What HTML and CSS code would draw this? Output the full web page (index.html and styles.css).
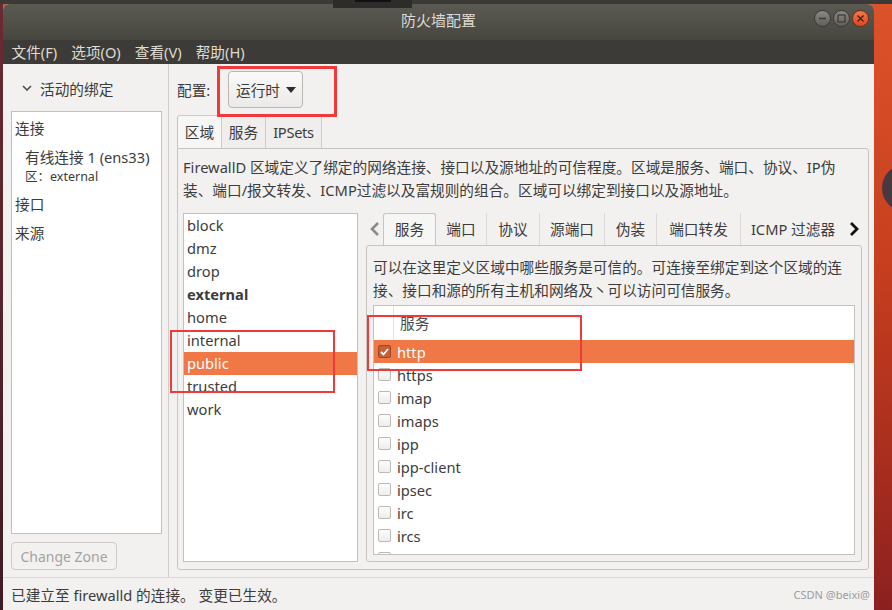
FILE: index.html
```html
<!DOCTYPE html>
<html>
<head>
    <meta charset="UTF-8">
    <title>防火墙配置</title>
    <link rel="stylesheet" href="styles.css">
</head>
<body>

<div class="topbar"></div>
<div class="dock-tab"><i></i></div>
<div class="wall-circle"></div>

<div class="desk">
    <div class="edge"></div>
    <div class="window">
        <div class="titlebar">
            <span class="title">防火墙配置</span>
            <div class="win-btns">
                <span class="wb"><svg width="9" height="9" viewBox="0 0 9 9"><path d="M1 4.5h7" stroke="#3a3935" stroke-width="1.4"/></svg></span>
                <span class="wb"><svg width="9" height="9" viewBox="0 0 9 9"><rect x="1" y="1" width="7" height="7" fill="none" stroke="#3a3935" stroke-width="1.2"/></svg></span>
                <span class="wb close"><svg width="9" height="9" viewBox="0 0 9 9"><path d="M1.5 1.5l6 6M7.5 1.5l-6 6" stroke="#4a1a0c" stroke-width="1.3"/></svg></span>
            </div>
        </div>

        <div class="menubar">
            <span>文件(F)</span>
            <span>选项(O)</span>
            <span>查看(V)</span>
            <span>帮助(H)</span>
        </div>

        <div class="main">
            <div class="side">
                <div class="side-head">
                    <svg width="10" height="6" viewBox="0 0 10 6"><path d="M1 1l4 4 4-4" fill="none" stroke="#4c4c4c" stroke-width="1.6"/></svg>
                    <span>活动的绑定</span>
                </div>
                <div class="bind-box">
                    <div class="bind-title">连接</div>
                    <div class="bind-item">有线连接 1 (ens33)</div>
                    <div class="bind-sub">区：external</div>
                    <div class="bind-title next">接口</div>
                    <div class="bind-title next">来源</div>
                </div>
                <div class="btn-disabled">Change Zone</div>
            </div>

            <div class="content">
                <div class="config-row">
                    <span class="config-label">配置:</span>
                    <div class="combo">运行时
                        <svg width="10" height="6" viewBox="0 0 10 6"><path d="M0 0h10L5 6z" fill="#2e2e2e"/></svg>
                    </div>
                </div>

                <div class="tabs">
                    <span class="tab on">区域</span>
                    <span class="tab">服务</span>
                    <span class="tab">IPSets</span>
                </div>

                <div class="page">
                    <p class="desc">FirewallD 区域定义了绑定的网络连接、接口以及源地址的可信程度。区域是服务、端口、协议、IP伪<br>装、端口/报文转发、ICMP过滤以及富规则的组合。区域可以绑定到接口以及源地址。</p>

                    <div class="zone-row">
                        <div class="zone-list">
                            <div class="zone">block</div>
                            <div class="zone">dmz</div>
                            <div class="zone">drop</div>
                            <div class="zone bold">external</div>
                            <div class="zone">home</div>
                            <div class="zone">internal</div>
                            <div class="zone sel">public</div>
                            <div class="zone">trusted</div>
                            <div class="zone">work</div>
                        </div>

                        <div class="sub-nb">
                            <div class="sub-tabs">
                                <span class="nav"><svg width="10" height="16" viewBox="0 0 10 16"><path d="M8 2L2 8l6 6" fill="none" stroke="#8c8b88" stroke-width="2.6"/></svg></span>
                                <div class="stab-row">
                                    <span class="stab on">服务</span>
                                    <span class="stab">端口</span>
                                    <span class="stab">协议</span>
                                    <span class="stab">源端口</span>
                                    <span class="stab">伪装</span>
                                    <span class="stab">端口转发</span>
                                    <span class="stab">ICMP 过滤器</span>
                                </div>
                                <span class="nav"><svg width="10" height="16" viewBox="0 0 10 16"><path d="M2 2l6 6-6 6" fill="none" stroke="#111" stroke-width="2.8"/></svg></span>
                            </div>
                            <div class="sub-page">
                                <p class="desc">可以在这里定义区域中哪些服务是可信的。可连接至绑定到这个区域的连<br>接、接口和源的所有主机和网络及丶可以访问可信服务。</p>
                                <div class="svc-list">
                                    <div class="svc-head"><span class="col0"></span><span class="col1">服务</span></div>
                                    <div class="svc sel"><span class="cb on"><svg width="9" height="8" viewBox="0 0 9 8"><path d="M1 4l2.5 2.5L8 1" fill="none" stroke="#fff" stroke-width="1.8"/></svg></span>http</div>
                                    <div class="svc"><span class="cb"></span>https</div>
                                    <div class="svc"><span class="cb"></span>imap</div>
                                    <div class="svc"><span class="cb"></span>imaps</div>
                                    <div class="svc"><span class="cb"></span>ipp</div>
                                    <div class="svc"><span class="cb"></span>ipp-client</div>
                                    <div class="svc"><span class="cb"></span>ipsec</div>
                                    <div class="svc"><span class="cb"></span>irc</div>
                                    <div class="svc"><span class="cb"></span>ircs</div>
                                    <div class="svc"><span class="cb"></span>iscsi-target</div>
                                </div>
                            </div>
                        </div>
                    </div>
                </div>
            </div>
        </div>

        <div class="status">
            <span>已建立至 firewalld 的连接。 变更已生效。</span>
            <span class="mark-text">CSDN @beixi@</span>
        </div>
    </div>
</div>

<div class="mark mark-a"></div>
<div class="mark mark-b"></div>
<div class="mark mark-c"></div>

</body>
</html>
```

FILE: styles.css
```css
*{ margin: 0; padding: 0; box-sizing: border-box;}
body {width: 892px;height: 610px;overflow: hidden;position: relative;font-family: "Noto Sans", "Noto Sans CJK SC", sans-serif;font-size: 14.67px;color: #3c3c3c;background: linear-gradient(180deg, #dc532a 0%, #c9401f 40%, #a92e1e 75%, #8b2020 100%);}

.topbar {height: 4px;background: #3b3a36;}
.dock-tab {position: absolute;left: 333px;top: 0;width: 79px;height: 8px;background: #2c2c2b;z-index: 3;}
.dock-tab i {display: block;margin: 0 auto;width: 36px;height: 2px;background: #111;}
.wall-circle {position: absolute;left: 882px;top: 164px;width: 48px;height: 48px;border-radius: 50%;background: #4b3740;}

.desk {display: flex;height: 606px;}
.edge {width: 3px;background: linear-gradient(#6b2a33, #3d1d24);}
.window {width: 871px;display: flex;flex-direction: column;background: #f2f1f0;border-radius: 6px 6px 0 0;overflow: hidden;}

/* title bar */
.titlebar {height: 36px;flex-shrink: 0;display: grid;grid-template-columns: 1fr auto 1fr;align-items: start;background: linear-gradient(#5a5952, #47463f);color: #dfdbd2;font-size: 15px;}
.title {grid-column: 2;line-height: 20px;margin-top: 6px;}
.win-btns {grid-column: 3;justify-self: end;display: flex;gap: 2px;margin: 6px 5px 0 0;}
.wb {width: 17px;height: 17px;border-radius: 50%;display: flex;align-items: center;justify-content: center;background: linear-gradient(#8a8984, #5f5e59);border: 1px solid #3a3935;}
.wb.close {background: linear-gradient(#f47a4a, #d9481e);border-color: #7a2a12;}

.menubar {height: 24px;flex-shrink: 0;display: flex;align-items: center;padding-left: 1px;background: #3c3b37;color: #dfdbd2;}
.menubar span {padding: 0 7px;line-height: 24px;}
.menubar span:first-child {padding-left: 7.5px;}

/* main */
.main {height: 513px;flex-shrink: 0;display: flex;}
.side {width: 166px;display: flex;flex-direction: column;padding: 12px 6px 7px 8px;border-right: 1px solid #d0cdc9;}
.side-head {height: 24px;display: flex;align-items: center;gap: 8px;padding-left: 11px;}
.bind-box {flex: 1;margin-top: 11px;background: #fff;border: 1px solid #c4c1bc;padding-top: 4px;}
.bind-title {line-height: 24px;padding-left: 3px;}
.bind-title.next {margin-top: 5px;}
.bind-item {line-height: 20px;padding-left: 13px;margin-top: 7px;}
.bind-sub {font-size: 12.5px;line-height: 20px;padding-left: 13px;}
.btn-disabled {margin-top: 8px;width: 106px;height: 28px;border: 1px solid #cfccc7;border-radius: 4px;background: #f2f1f0;color: #a5a39f;display: flex;align-items: center;justify-content: center;font-size: 14px;}

.content {flex: 1;min-width: 0;display: flex;flex-direction: column;padding: 7px 5px 7px 8px;}
.config-row {display: flex;align-items: center;height: 37px;flex-shrink: 0;}
.config-label {width: 51px;}
.combo {height: 37px;width: 75px;display: flex;align-items: center;gap: 6px;padding-left: 7px;border: 1px solid #bab7b1;border-radius: 4px;background: linear-gradient(#fafaf9, #ebeae8);}

.tabs {display: flex;margin-top: 7px;height: 33px;flex-shrink: 0;}
.tab {width: 44px;text-align: center;line-height: 32px;border: 1px solid #d0cdc8;border-bottom: none;border-left: none;background: #efeeec;white-space: nowrap;}
.tab.on {width: 45px;border-left: 1px solid #c8c5c0;border-radius: 3px 3px 0 0;background: #f6f6f5;}
.tab:last-child {width: 56px;letter-spacing: -0.3px;}

.page {flex: 1;min-height: 0;border: 1px solid #c8c5c0;border-radius: 0 3px 3px 3px;padding: 7px 6px 7px 5px;display: flex;flex-direction: column;}
.desc {line-height: 23px;white-space: nowrap;flex-shrink: 0;}

.zone-row {flex: 1;min-height: 0;display: flex;gap: 8px;margin-top: 11px;}
.zone-list {width: 175px;flex-shrink: 0;background: #fff;border: 1px solid #c4c1bc;overflow: hidden;}
.zone {line-height: 23px;padding-left: 3px;}
.zone.bold {font-weight: bold;}
.zone.sel {background: #f07746;color: #fff;}

.sub-nb {flex: 1;min-width: 0;min-height: 0;display: flex;flex-direction: column;}
.sub-tabs {height: 32px;flex-shrink: 0;display: flex;}
.nav {width: 17px;flex-shrink: 0;display: flex;align-items: center;justify-content: center;}
.stab-row {display: flex;flex: 1;min-width: 0;overflow: hidden;}
.stab {flex-shrink: 0;text-align: center;white-space: nowrap;line-height: 32px;border-right: 1px solid #dcdad6;}
.stab:nth-child(1) {width: 53px;}
.stab:nth-child(2) {width: 51px;}
.stab:nth-child(3) {width: 53px;}
.stab:nth-child(4) {width: 65px;}
.stab:nth-child(5) {width: 52px;}
.stab:nth-child(6) {width: 84px;}
.stab:nth-child(7) {width: 104px;border-right: none;}
.stab.on {border: 1px solid #c8c5c0;border-bottom: none;border-radius: 3px 3px 0 0;background: #f6f6f5;line-height: 31px;}
.sub-page {flex: 1;min-height: 0;border: 1px solid #c8c5c0;border-radius: 3px;padding: 10px 6px 6px 6px;display: flex;flex-direction: column;}
.sub-page .desc {margin-bottom: 3px;}

.svc-list {flex: 1;min-height: 0;background: #fff;border: 1px solid #c4c1bc;overflow: hidden;}
.svc-head {height: 34px;display: flex;}
.svc-head .col0 {width: 20px;border-right: 1px solid #e6e4e1;}
.svc-head .col1 {padding-left: 6px;line-height: 34px;color: #4a4a4a;}
.svc {height: 23px;display: flex;align-items: center;padding-left: 4px;}
.svc.sel {background: #f07746;color: #fff;}
.cb {width: 13px;height: 13px;margin-right: 6px;border: 1px solid #bcb9b4;border-radius: 2px;background: linear-gradient(#fdfdfd, #ededec);display: flex;align-items: center;justify-content: center;}
.cb.on {background: #c45f38;border-color: #9c4826;}

.status {flex: 1;display: flex;align-items: center;padding: 0 4px 0 8px;border-top: 1px solid #dcdad6;white-space: nowrap;}
.mark-text {margin-left: auto;font-size: 11px;color: #9d9b98;}

/* red annotation boxes drawn over the screenshot */
.mark {position: absolute;border: 3px solid #f0393b;z-index: 5;}
.mark-a {left: 217px;top: 66px;width: 120px;height: 51px;}
.mark-b {left: 170px;top: 330px;width: 165px;height: 63px;border-width: 2.5px;}
.mark-c {left: 367px;top: 315px;width: 215px;height: 56px;border-width: 2.5px;}
```
